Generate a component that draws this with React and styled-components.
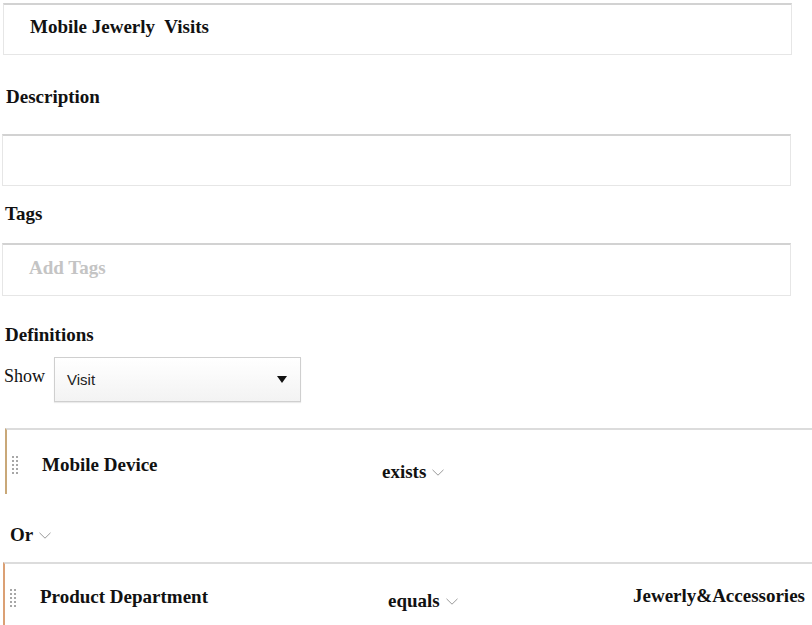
import React from "react";
import styled, { createGlobalStyle } from "styled-components";

const GlobalStyle = createGlobalStyle`
  body {
    margin: 0;
    background: #fff;
    font-family: "Liberation Serif", "Times New Roman", serif;
    color: #111;
  }
`;

const Page = styled.div`
  width: 812px;
  height: 625px;
  overflow: hidden;
  padding-top: 3px;
  box-sizing: border-box;
`;

const FieldBox = styled.div`
  box-sizing: border-box;
  margin-left: ${(p) => p.$left || 2}px;
  width: ${(p) => p.$width || 789}px;
  height: ${(p) => p.$height || 52}px;
  margin-top: ${(p) => p.$top || 0}px;
  border: 1px solid #e6e6e6;
  border-top: 2px solid #d2d2d2;
  background: #fff;
  display: flex;
  align-items: center;
  padding: 0 0 5px 26px;
  font-size: 19px;
  font-weight: bold;
  color: ${(p) => (p.$placeholder ? "#c4c4c4" : "#111")};
`;

const Label = styled.div`
  font-size: 19px;
  font-weight: bold;
  line-height: 22px;
  margin-top: ${(p) => p.$top}px;
  margin-left: ${(p) => p.$left || 5}px;
`;

const ShowRow = styled.div`
  display: flex;
  align-items: flex-start;
  margin-top: 11px;
  padding-left: 4px;
`;

const ShowText = styled.span`
  font-size: 18px;
  line-height: 22px;
  margin-top: 8px;
  width: 50px;
`;

const Select = styled.div`
  box-sizing: border-box;
  width: 247px;
  height: 45px;
  border: 1px solid #cfcfcf;
  background: linear-gradient(#ffffff, #f3f3f3);
  box-shadow: 0 1px 1px rgba(0, 0, 0, 0.08);
  display: flex;
  align-items: center;
  justify-content: space-between;
  padding: 0 13px 0 12px;
  font-family: "Liberation Sans", Arial, sans-serif;
  font-size: 15px;
  color: #222;
`;

const Caret = styled.span`
  width: 0;
  height: 0;
  border-left: 5.5px solid transparent;
  border-right: 5.5px solid transparent;
  border-top: 7px solid #111;
`;

const RuleRow = styled.div`
  margin-top: ${(p) => p.$top}px;
  margin-left: ${(p) => p.$left}px;
  height: ${(p) => p.$height}px;
  border-top: 2px solid #dcdcdc;
  border-left: 2px solid ${(p) => p.$bar};
  display: grid;
  grid-template-columns: 30px 340px 253px 1fr;
  align-items: start;
  padding-left: 5px;
`;

const Handle = styled.div`
  display: grid;
  grid-template-columns: 2px 2px;
  grid-auto-rows: 2px;
  column-gap: 2px;
  row-gap: 2px;
  margin-top: ${(p) => p.$top}px;
  span {
    background: #8a8a8a;
    border-radius: 1px;
  }
`;

const FieldName = styled.div`
  font-size: 19px;
  font-weight: bold;
  line-height: 22px;
  margin-top: ${(p) => p.$top}px;
`;

const Operator = styled.div`
  display: flex;
  align-items: center;
  gap: 6px;
  font-size: 19px;
  font-weight: bold;
  line-height: 22px;
  margin-top: ${(p) => p.$top}px;
  padding-left: ${(p) => p.$pad || 0}px;
`;

const OrRow = styled(Operator)`
  margin-left: 10px;
`;

const Chevron = () => (
  <svg width="12" height="7" viewBox="0 0 12 7">
    <polyline points="0.5,0.8 6,6.2 11.5,0.8" fill="none" stroke="#9a9a9a" strokeWidth="1" />
  </svg>
);

const DragHandle = ({ top }) => (
  <Handle $top={top}>
    {Array.from({ length: 10 }).map((_, i) => (
      <span key={i} />
    ))}
  </Handle>
);

const App = () => {
  return (
    <Page>
      <GlobalStyle />
      <FieldBox $left={3} $width={789} $height={52}>
        Mobile Jewerly&nbsp; Visits
      </FieldBox>

      <Label $top={31} $left={6}>Description</Label>
      <FieldBox $top={26} $height={52} />

      <Label $top={17}>Tags</Label>
      <FieldBox $top={18} $height={53} $placeholder>
        Add Tags
      </FieldBox>

      <Label $top={28}>Definitions</Label>
      <ShowRow>
        <ShowText>Show</ShowText>
        <Select>
          <span>Visit</span>
          <Caret />
        </Select>
      </ShowRow>

      <RuleRow $top={26} $left={5} $height={64} $bar="#c9a878">
        <DragHandle top={26} />
        <FieldName $top={24}>Mobile Device</FieldName>
        <Operator $top={31}>
          exists <Chevron />
        </Operator>
        <div />
      </RuleRow>

      <OrRow $top={30}>
        Or <Chevron />
      </OrRow>

      <RuleRow $top={16} $left={3} $height={70} $bar="#dba074">
        <DragHandle top={25} />
        <FieldName $top={22}>Product Department</FieldName>
        <Operator $top={26} $pad={8}>
          equals <Chevron />
        </Operator>
        <FieldName $top={21}>Jewerly&amp;Accessories</FieldName>
      </RuleRow>
    </Page>
  );
};

export default App;
